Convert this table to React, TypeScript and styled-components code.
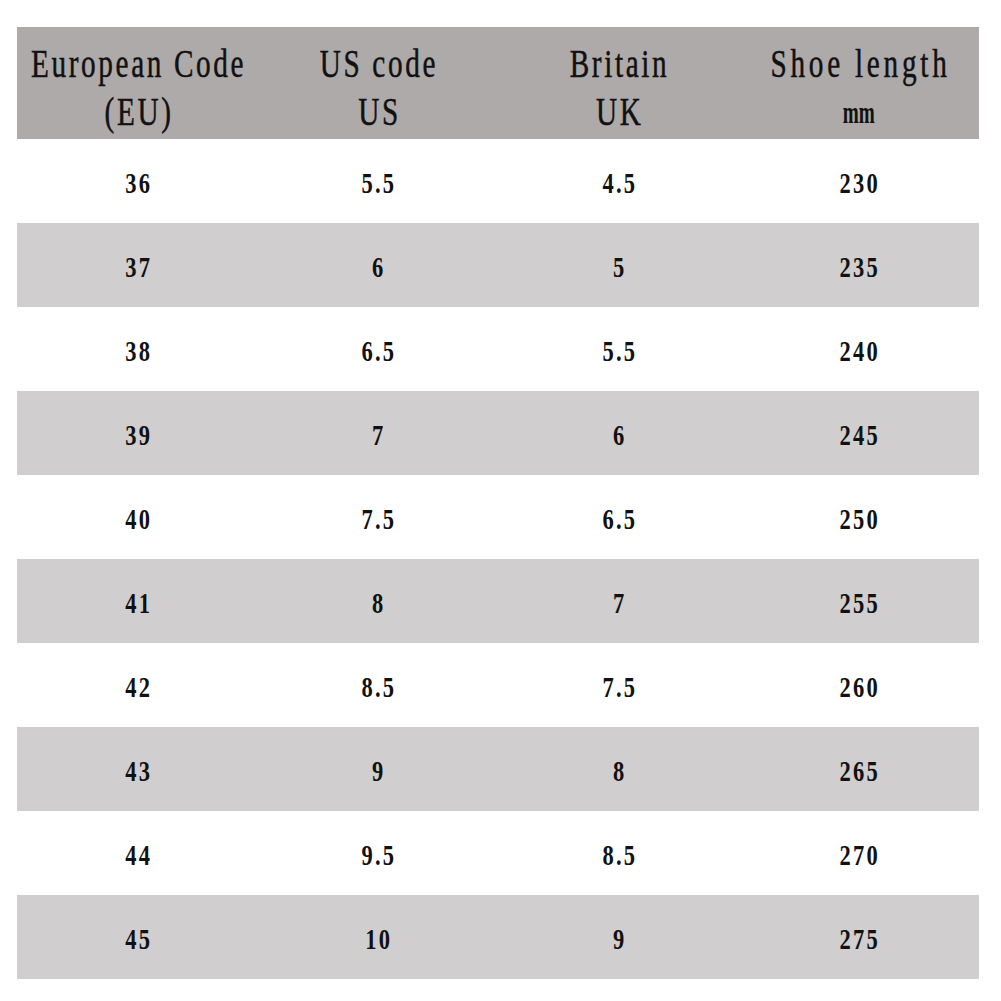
import React from 'react';
import styled, { createGlobalStyle } from 'styled-components';

type SizeRow = {
    eu: string;
    us: string;
    uk: string;
    mm: string;
};

const sizes: SizeRow[] = [
    { eu: '36', us: '5.5', uk: '4.5', mm: '230' },
    { eu: '37', us: '6', uk: '5', mm: '235' },
    { eu: '38', us: '6.5', uk: '5.5', mm: '240' },
    { eu: '39', us: '7', uk: '6', mm: '245' },
    { eu: '40', us: '7.5', uk: '6.5', mm: '250' },
    { eu: '41', us: '8', uk: '7', mm: '255' },
    { eu: '42', us: '8.5', uk: '7.5', mm: '260' },
    { eu: '43', us: '9', uk: '8', mm: '265' },
    { eu: '44', us: '9.5', uk: '8.5', mm: '270' },
    { eu: '45', us: '10', uk: '9', mm: '275' },
];

const headers = [
    { top: 'European Code', bottom: '(EU)', spacing: 3.5 },
    { top: 'US code', bottom: 'US', spacing: 3.5 },
    { top: 'Britain', bottom: 'UK', spacing: 3.5 },
    { top: 'Shoe length', bottom: 'mm', spacing: 5, unit: true },
];

const GlobalStyle = createGlobalStyle`
    html, body {
        margin: 0;
        padding: 0;
        background: #ffffff;
    }
    body {
        font-family: 'Liberation Serif', 'DejaVu Serif', serif;
        color: #111111;
    }
`;

const Page = styled.div`
    width: 1001px;
    height: 1001px;
    padding: 27px 0 0 17px;
    box-sizing: border-box;
`;

const Table = styled.div`
    width: 962px;
    display: flex;
    flex-direction: column;
`;

const Row = styled.div<{ $shade: 'head' | 'stripe' | 'plain' }>`
    display: grid;
    grid-template-columns: repeat(4, 1fr);
    height: ${({ $shade }) => ($shade === 'head' ? '112px' : '84px')};
    background: ${({ $shade }) => {
        switch ($shade) {
            case 'head':
                return '#aeaaaa';
            case 'stripe':
                return '#d0cece';
            default:
                return '#ffffff';
        }
    }};
`;

const Cell = styled.div<{ $head?: boolean }>`
    display: flex;
    flex-direction: column;
    align-items: center;
    justify-content: center;
    min-width: 0;
    padding-top: ${({ $head }) => ($head ? '10px' : '4px')};
    box-sizing: border-box;
`;

const HeadLine = styled.span<{ $spacing: number }>`
    display: block;
    white-space: nowrap;
    font-family: 'Liberation Serif', serif;
    font-size: 39px;
    line-height: 48px;
    letter-spacing: ${({ $spacing }) => $spacing}px;
    padding-left: ${({ $spacing }) => $spacing}px;
    -webkit-text-stroke: 0.5px #111111;
    transform: scaleX(0.75);
`;

const Unit = styled.span`
    display: block;
    white-space: nowrap;
    font-family: 'Liberation Serif', serif;
    font-weight: bold;
    font-size: 32px;
    line-height: 48px;
    transform: scaleX(0.6);
`;

const Num = styled.span`
    display: block;
    white-space: nowrap;
    font-family: 'Liberation Serif', serif;
    font-weight: bold;
    font-size: 30px;
    line-height: 34px;
    letter-spacing: 3px;
    padding-left: 3px;
    transform: scaleX(0.75);
`;

const App = (): JSX.Element => (
    <>
        <GlobalStyle />
        <Page>
            <Table>
                <Row $shade="head">
                    {headers.map((h) => (
                        <Cell key={h.top} $head>
                            <HeadLine $spacing={h.spacing}>{h.top}</HeadLine>
                            {h.unit ? (
                                <Unit>{h.bottom}</Unit>
                            ) : (
                                <HeadLine $spacing={h.spacing}>{h.bottom}</HeadLine>
                            )}
                        </Cell>
                    ))}
                </Row>
                {sizes.map((s, i) => (
                    <Row key={s.eu} $shade={i % 2 === 1 ? 'stripe' : 'plain'}>
                        <Cell>
                            <Num>{s.eu}</Num>
                        </Cell>
                        <Cell>
                            <Num>{s.us}</Num>
                        </Cell>
                        <Cell>
                            <Num>{s.uk}</Num>
                        </Cell>
                        <Cell>
                            <Num>{s.mm}</Num>
                        </Cell>
                    </Row>
                ))}
            </Table>
        </Page>
    </>
);

export default App;
